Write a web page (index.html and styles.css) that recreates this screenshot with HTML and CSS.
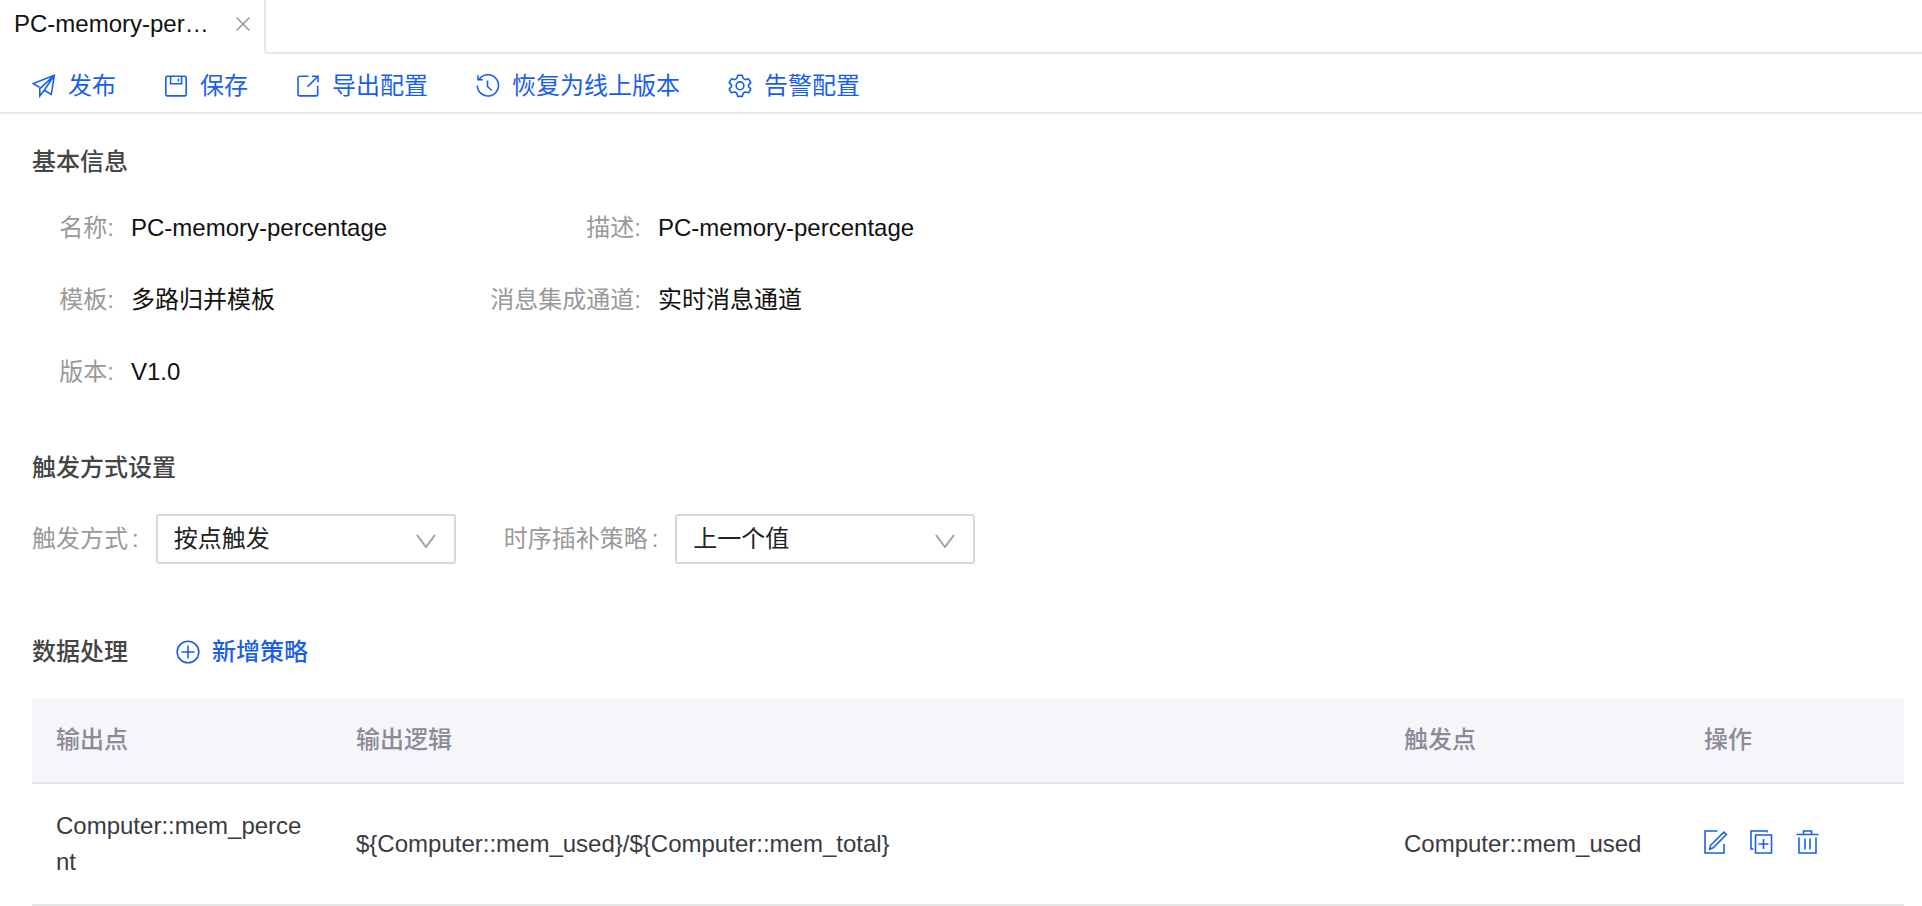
FILE: index.html
```html
<!DOCTYPE html>
<html lang="zh-CN">
<head>
<meta charset="utf-8">
<title>PC-memory-percentage</title>
<link rel="stylesheet" href="styles.css">
</head>
<body>
<nav class="tabs">
  <div class="tab">
    <a class="tab-name" href="#">PC-memory-per…</a>
    <button class="tab-close" type="button" aria-label="关闭">
      <svg class="close-icon" viewBox="0 0 16 16"><path d="M1.5 1.5l13 13M14.5 1.5l-13 13"/></svg>
    </button>
  </div>
  <div class="tabs-rest"></div>
</nav>

<div class="toolbar">
  <button class="action" type="button">
    <svg class="icon" viewBox="0 0 24 24"><path d="M7.500 13.200L1.200 9.600l21.100-8.300-3 19.200-7-4.200M22.300 1.300L7.800 14.600v7.400l4.500-5.700z"/></svg>
    发布
  </button>
  <button class="action" type="button">
    <svg class="icon" viewBox="0 0 24 24"><path d="M3.300 2.200h17.400a1.500 1.500 0 0 1 1.500 1.500v16.700a1.500 1.500 0 0 1-1.500 1.500H3.300a1.500 1.500 0 0 1-1.500-1.500V3.700a1.500 1.500 0 0 1 1.500-1.500zM6.600 2.200v7.600h11V2.200M14.400 4.600v2.800"/></svg>
    保存
  </button>
  <button class="action" type="button">
    <svg class="icon" viewBox="0 0 24 24"><path d="M12.500 2.200H3.800a1.800 1.800 0 0 0-1.800 1.800v16.100a1.800 1.800 0 0 0 1.800 1.800h16.100a1.800 1.800 0 0 0 1.800-1.800v-8.400M16 2.200h6v6M22 2.200L11.600 12.600"/></svg>
    导出配置
  </button>
  <button class="action" type="button">
    <svg class="icon" viewBox="0 0 24 24"><path d="M3.200 5.300a10.600 10.600 0 1 1-1.900 6.200M2 1.200v4.600h4.800M11.500 6.500v6l4.200 4"/></svg>
    恢复为线上版本
  </button>
  <button class="action" type="button">
    <svg class="icon icon-round" viewBox="0 0 24 24"><path d="M9.800 1.200h4.400l1 3.200 2.100 1.200 3.300-.8 2.200 3.800-2.300 2.500v1.400l2.300 2.500-2.200 3.800-3.300-.8-2.100 1.200-1 3.200H9.800l-1-3.200-2.100-1.200-3.300.8-2.200-3.800 2.300-2.500v-1.400L1.200 8.600l2.200-3.800 3.300.8 2.100-1.200z"/><circle cx="12" cy="11.800" r="3.900"/></svg>
    告警配置
  </button>
</div>

<main class="content">
  <section class="section">
    <h2 class="heading">基本信息</h2>
    <dl class="info">
      <dt>名称:</dt><dd>PC-memory-percentage</dd>
      <dt>描述:</dt><dd>PC-memory-percentage</dd>
      <dt>模板:</dt><dd>多路归并模板</dd>
      <dt>消息集成通道:</dt><dd>实时消息通道</dd>
      <dt>版本:</dt><dd>V1.0</dd>
    </dl>
  </section>

  <section class="section">
    <h2 class="heading">触发方式设置</h2>
    <form class="fields">
      <div class="field">
        <label class="field-label" for="trigger">触发方式<span class="colon">:</span></label>
        <div class="select-box">
          <select class="select" id="trigger"><option>按点触发</option></select>
          <svg class="chevron" viewBox="0 0 20 14"><path d="M1 1l9 12 9-12"/></svg>
        </div>
      </div>
      <div class="field">
        <label class="field-label" for="fill">时序插补策略<span class="colon">:</span></label>
        <div class="select-box">
          <select class="select" id="fill"><option>上一个值</option></select>
          <svg class="chevron" viewBox="0 0 20 14"><path d="M1 1l9 12 9-12"/></svg>
        </div>
      </div>
    </form>
  </section>

  <section class="section">
    <div class="heading-row">
      <h2 class="heading">数据处理</h2>
      <button class="action action-strong" type="button">
        <svg class="icon" viewBox="0 0 24 24"><circle cx="12" cy="12" r="10.800"/><path d="M12 5.500v13M5.500 12h13"/></svg>
        新增策略
      </button>
    </div>
    <table class="table">
      <colgroup><col class="col-point"><col><col class="col-point"><col class="col-ops"></colgroup>
      <thead>
        <tr><th scope="col">输出点</th><th scope="col">输出逻辑</th><th scope="col">触发点</th><th scope="col">操作</th></tr>
      </thead>
      <tbody>
        <tr>
          <td>Computer::mem_percent</td>
          <td>${Computer::mem_used}/${Computer::mem_total}</td>
          <td>Computer::mem_used</td>
          <td>
            <div class="ops">
              <button class="op" type="button" aria-label="编辑">
                <svg class="icon" viewBox="0 0 24 24"><path d="M13.500 1H1v22h19V14M19.800 2.200l2.500 2.300L9.200 17.800l-3.600 1.400 1-3.900z"/></svg>
              </button>
              <button class="op" type="button" aria-label="复制">
                <svg class="icon" viewBox="0 0 24 24"><path d="M17 2.500V1H1v18h2.500M5.500 5H21.500v18H5.500zM13.500 9v10M8.500 14h10"/></svg>
              </button>
              <button class="op" type="button" aria-label="删除">
                <svg class="icon" viewBox="0 0 24 24"><path d="M.5 4.500h22M7.500 4.500V1h8v3.500M3 7.500V23h17V7.500M9 8.500v11M14 8.500v11"/></svg>
              </button>
            </div>
          </td>
        </tr>
      </tbody>
    </table>
  </section>
</main>
</body>
</html>
```

FILE: styles.css
```css
* { box-sizing: border-box; }

body {
  margin: 0;
  background: #fff;
  color: #111;
  font: 24px/36px "Liberation Sans", "Noto Sans CJK SC", sans-serif;
}

button {
  padding: 0;
  border: 0;
  background: none;
  font: inherit;
  cursor: pointer;
}

svg {
  display: block;
  flex: none;
  fill: none;
  stroke: currentColor;
}

/* Tabs */
.tabs { display: flex; height: 54px; }

.tab {
  display: flex;
  align-items: center;
  justify-content: space-between;
  width: 264px;
  padding: 0 13px 6px 14px;
}

.tab-name { color: #111; text-decoration: none; }
.tab-close { color: #999; }
.close-icon { width: 16px; height: 16px; stroke-width: 1.5; }

.tabs-rest {
  flex: 1;
  border: solid #e8e8e8;
  border-width: 0 0 2px 2px;
  border-bottom-left-radius: 4px;
}

/* Toolbar */
.toolbar {
  display: flex;
  gap: 48px;
  padding: 14px 32px 8px;
  border-bottom: 2px solid #e8e8e8;
}

.action {
  display: flex;
  align-items: center;
  gap: 12px;
  color: #1b5fe8;
  white-space: nowrap;
}

.action-strong { font-weight: 500; }
.icon { width: 24px; height: 24px; stroke-width: 1.6; }
.icon-round { stroke-linejoin: round; }

/* Sections */
.content { padding: 30px 18px 0 32px; }
.section + .section { margin-top: 60px; }
.heading { margin: 0; color: #444; font-size: 24px; font-weight: 500; }
.heading-row { display: flex; align-items: center; gap: 48px; }

.info {
  display: grid;
  grid-template-columns: 82px 328px 165px 1fr;
  gap: 36px 17px;
  margin: 30px 0 0;
}

.info dt { color: #999; text-align: right; }
.info dd { margin: 0; }

.fields { display: flex; gap: 48px; margin: 28px 0 70px; }
.field { display: flex; align-items: center; }
.field-label { color: #999; }
.colon { margin: 0 17px 0 4px; }
.select-box { position: relative; }

.select {
  display: block;
  width: 300px;
  height: 50px;
  padding: 0 48px 0 16px;
  border: 2px solid #d7d8dc;
  border-radius: 3px;
  background: #fff;
  color: #222;
  font: inherit;
  appearance: none;
}

.chevron {
  position: absolute;
  top: 20px;
  right: 20px;
  width: 20px;
  height: 14px;
  color: #a0a0aa;
  stroke-width: 2;
  pointer-events: none;
}

/* Table */
.table {
  width: 100%;
  margin-top: 28px;
  border-collapse: separate;
  border-spacing: 0;
  table-layout: fixed;
}

.col-point { width: 300px; }
.col-ops { width: 224px; }

.table th,
.table td {
  padding: 24px;
  border-bottom: 2px solid #e4e4e9;
  text-align: left;
}

.table th { background: #f6f5fa; color: #8b8b98; font-weight: 500; }
.table td { color: #3b3b42; word-break: break-all; }

.ops { display: flex; gap: 22px; padding-bottom: 4px; }
.op { color: #1b5fe8; }
```
